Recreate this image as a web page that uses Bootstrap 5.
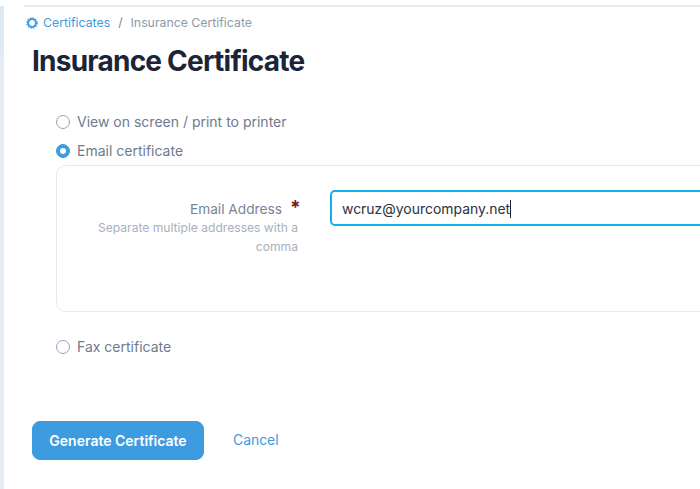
<!DOCTYPE html>
<html lang="en">
<head>
<meta charset="utf-8">
<title>Insurance Certificate</title>
<link href="https://cdn.jsdelivr.net/npm/bootstrap@5.3.0/dist/css/bootstrap.min.css" rel="stylesheet">
<style>
html,body{height:489px;overflow:hidden;}
body{font-family:Inter,"Liberation Sans",sans-serif;background:#fff;color:#6b7280;}
.app-shell{height:489px;overflow:hidden;}
.side-strip{width:4px;flex:none;background:#e8edf5;margin-top:6px;}
.strip-top{height:49px;background:#dde9f5;}
.main-area{flex:none;width:696px;padding-left:20px;}
.top-rule{height:2px;background:#e5e9f0;margin-top:5px;}
.crumbs{padding-left:1px;margin:0;padding-top:7px;height:28px;font-size:12.3px;line-height:17px;--bs-breadcrumb-divider-color:#7b8794;--bs-breadcrumb-item-active-color:#8a9bab;--bs-breadcrumb-item-padding-x:8px;--bs-breadcrumb-margin-bottom:0;}
.crumbs a{color:#3d9be0;text-decoration:none;}
.crumb-icon{width:12px;height:12px;margin-left:1px;margin-right:5px;vertical-align:-2px;}
.page-title{font-size:28px;font-weight:700;color:#1b2537;line-height:36px;letter-spacing:-.78px;margin:8px 0 0 8px;}
.form-zone{margin:28px 0 0 32px;}
.opt{display:flex;align-items:center;gap:7px;margin:0;height:29px;padding:0;min-height:0;font-size:14px;color:#6f7a8d;}
.opt .form-check-input{width:14px;height:14px;margin:0;float:none;flex:none;border:1px solid #98a2b8;background-color:#fff;box-shadow:none;}
.opt .form-check-input:checked{background-color:#3d9be0;border-color:#3d9be0;}
.email-panel{width:700px;height:147px;border:1px solid #e5e9f0;border-radius:10px;margin-top:0;padding:33px 0 0 0;}
.field-side{width:241px;flex:none;text-align:right;}
.field-label{font-size:13.7px;line-height:20px;color:#78839a;display:flex;justify-content:flex-end;}
.req-star{color:#7a1a1a;font-weight:700;margin-left:8px;margin-right:-2.5px;font-size:19px;line-height:18px;}
.field-hint{font-size:12.1px;line-height:19px;color:#a8b0bd;margin-top:-1px;}
.email-field{margin-left:32px;width:500px;flex:none;height:36px;border:2px solid #12aef0;border-radius:5px;padding:2px 10px 0;font-size:13.95px;color:#2b3240;display:flex;align-items:center;margin-top:-9px;}
.caret-bar{width:1px;height:18px;background:#1b2537;flex:none;}
.opt-after{margin-top:20px;}
.action-row{margin:60px 0 0 8px;gap:29px;}
.gen-btn{--bs-btn-bg:#3d9be0;--bs-btn-border-color:#3d9be0;--bs-btn-color:#fff;--bs-btn-hover-bg:#3d9be0;--bs-btn-hover-color:#fff;--bs-btn-font-size:14px;--bs-btn-font-weight:600;--bs-btn-border-radius:8px;width:172px;height:39px;padding:0;}
.cancel-link{color:#3d9be0;text-decoration:none;font-size:13.9px;}
</style>
</head>
<body>
<div class="app-shell d-flex">
  <div class="side-strip"><div class="strip-top"></div></div>
  <div class="main-area">
    <div class="top-rule"></div>
    <nav aria-label="breadcrumb">
      <ol class="breadcrumb crumbs">
        <li class="breadcrumb-item"><a href="#"><svg class="crumb-icon" viewBox="0 0 14 14" aria-hidden="true"><circle cx="7" cy="7" r="4.6" fill="none" stroke="#3d9be0" stroke-width="2.4"/><circle cx="7" cy="7" r="6.2" fill="none" stroke="#3d9be0" stroke-width="1.2" stroke-dasharray="1.6 1.65"/></svg>Certificates</a></li>
        <li class="breadcrumb-item active" aria-current="page">Insurance Certificate</li>
      </ol>
    </nav>
    <h1 class="page-title">Insurance Certificate</h1>
    <form class="form-zone">
      <label class="form-check opt"><input class="form-check-input" type="radio" name="delivery"><span>View on screen / print to printer</span></label>
      <label class="form-check opt"><input class="form-check-input" type="radio" name="delivery" checked><span>Email certificate</span></label>
      <div class="email-panel d-flex">
        <div class="field-side">
          <div class="field-label"><span>Email Address</span><span class="req-star">*</span></div>
          <div class="field-hint">Separate multiple addresses with a comma</div>
        </div>
        <div class="email-field"><span>wcruz@yourcompany.net</span><span class="caret-bar"></span></div>
      </div>
      <label class="form-check opt opt-after"><input class="form-check-input" type="radio" name="delivery"><span>Fax certificate</span></label>
    </form>
    <div class="action-row d-flex align-items-center">
      <button type="button" class="btn gen-btn">Generate Certificate</button>
      <a href="#" class="cancel-link">Cancel</a>
    </div>
  </div>
</div>
<script src="https://cdn.jsdelivr.net/npm/bootstrap@5.3.0/dist/js/bootstrap.bundle.min.js"></script>
</body>
</html>
